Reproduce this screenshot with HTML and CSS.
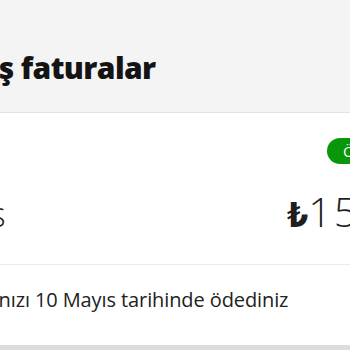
FILE: index.html
```html
<!DOCTYPE html>
<html lang="tr">
<head>
<meta charset="utf-8">
<link rel="stylesheet" href="styles.css">
</head>
<body>
<header class="head">
  <h1 class="title">Geçmiş faturalar</h1>
</header>
<section class="card">
  <div class="bill">
    <span class="badge">Ödendi</span>
    <span class="month">Mayıs</span>
    <span class="amount"><span class="lira">₺</span>159,90</span>
  </div>
  <p class="note">Faturanızı 10 Mayıs tarihinde ödediniz</p>
</section>
</body>
</html>
```
FILE: styles.css
```css
html, body {
  margin: 0;
  padding: 0;
}
body {
  width: 350px;
  height: 350px;
  overflow: hidden;
  background: #dcdcdc;
  font-family: "Open Sans", "DejaVu Sans", sans-serif;
  color: #1f1f1f;
}
.head {
  box-sizing: border-box;
  height: 112px;
  padding-top: 48px;
  background: #f4f4f4;
}
.title {
  margin: 0 0 0 -95px;
  font-size: 30px;
  line-height: 40px;
  font-weight: 800;
  white-space: nowrap;
  letter-spacing: -0.6px;
  color: #141414;
}
.card {
  background: #fff;
  border-top: 1px solid #e3e3e3;
  height: 232px;
}
.bill {
  display: grid;
  grid-template-columns: 1fr 63px;
  align-items: baseline;
  row-gap: 22px;
  padding: 25px 0 25px 0;
  border-bottom: 1px solid #ebebeb;
}
.badge {
  grid-column: 2;
  grid-row: 1;
  justify-self: start;
  margin-left: 40px;
  align-self: start;
  height: 26px;
  line-height: 26px;
  padding: 0 16px;
  border-radius: 13px;
  background: #0a960a;
  color: #fff;
  font-size: 15px;
  white-space: nowrap;
}
.month {
  grid-column: 1;
  grid-row: 2;
  margin-left: -81px;
  font-size: 34px;
  line-height: 50px;
  font-weight: 300;
  white-space: nowrap;
}
.amount {
  grid-column: 2;
  grid-row: 2;
  font-size: 41px;
  line-height: 50px;
  font-weight: 300;
  white-space: nowrap;
  letter-spacing: 2px;
}
.lira {
  font-weight: 700;
  font-size: 34px;
  font-stretch: 75%;
  letter-spacing: 0;
  margin-right: 0;
}
.note {
  margin: 0 0 0 -61px;
  padding-top: 21px;
  font-size: 20px;
  line-height: 28px;
  white-space: nowrap;
  letter-spacing: -0.1px;
  color: #222;
}
```
